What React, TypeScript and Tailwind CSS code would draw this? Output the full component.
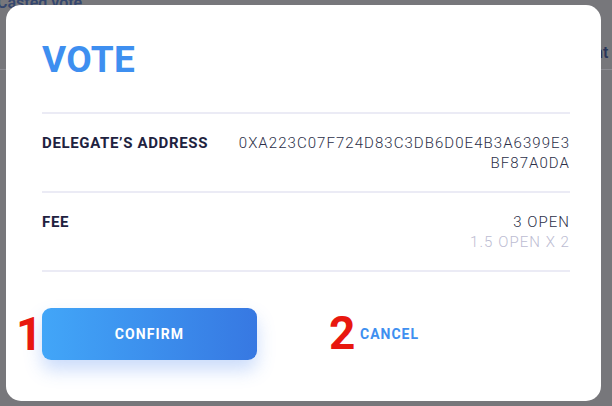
import React from "react";

const font = { fontFamily: "Roboto, 'Liberation Sans', sans-serif" };

function Row({
  label,
  children,
}: {
  label: string;
  children: React.ReactNode;
}) {
  return (
    <div className="flex items-start justify-between border-b-2 border-[#ebebf5] pt-[19px] pb-[18px]">
      <span className="text-[15px] leading-[20px] font-bold tracking-[0.65px] whitespace-nowrap text-[#1e2240]">
        {label}
      </span>
      {children}
    </div>
  );
}

export default function App() {
  return (
    <div
      className="relative h-[406px] w-[612px] overflow-hidden bg-[#77777b]"
      style={font}
    >
      {/* page behind the overlay */}
      <div className="absolute -top-[9px] -left-[3px] text-[16px] font-semibold text-[#34466e]">
        Casted vote
      </div>
      <div className="absolute top-[41px] left-[594px] text-[16px] font-semibold text-[#2a3558]">
        nt
      </div>
      <div className="absolute top-[69px] left-0 h-[1px] w-full bg-[#8c8c92]" />

      {/* modal */}
      <div className="absolute top-[5px] left-[6px] flex h-[396px] w-[595px] flex-col rounded-[15px] bg-white pt-[33px] pr-[31px] pl-[36px]">
        <h1 className="border-b-2 border-[#ebebf5] pb-[30px] text-[37px] leading-[44px] font-bold tracking-[0.3px] text-[#3e8ff0]">
          VOTE
        </h1>

        <Row label="DELEGATE’S ADDRESS">
          <div className="w-[336px] text-right text-[15px] leading-[20px] font-light tracking-[1.05px] break-all text-[#2b2f48]">
            0XA223C07F724D83C3DB6D0E4B3A6399E3BF87A0DA
          </div>
        </Row>

        <Row label="FEE">
          <div className="text-right text-[15px] leading-[20px] font-light tracking-[1.05px]">
            <div className="text-[#2b2f48]">3 OPEN</div>
            <div className="text-[#bcbcd2]">1.5 OPEN X 2</div>
          </div>
        </Row>

        <div className="mt-[36px] flex items-center">
          <div className="relative">
            <span className="absolute top-[3px] -left-[26px] text-[46px] leading-[46px] font-bold text-[#e8180f]">
              1
            </span>
            <button className="h-[52px] w-[215px] rounded-[9px] bg-gradient-to-r from-[#42a6f8] to-[#3778e2] text-[14px] font-bold tracking-[1.1px] text-white shadow-[0_10px_18px_rgba(70,130,240,0.28)]">
              CONFIRM
            </button>
          </div>
          <div className="relative ml-[103px]">
            <span className="absolute top-[-12px] -left-[31px] text-[46px] leading-[46px] font-bold text-[#e8180f]">
              2
            </span>
            <button className="text-[14px] font-bold tracking-[1px] text-[#3e8ff0]">
              CANCEL
            </button>
          </div>
        </div>
      </div>
    </div>
  );
}
